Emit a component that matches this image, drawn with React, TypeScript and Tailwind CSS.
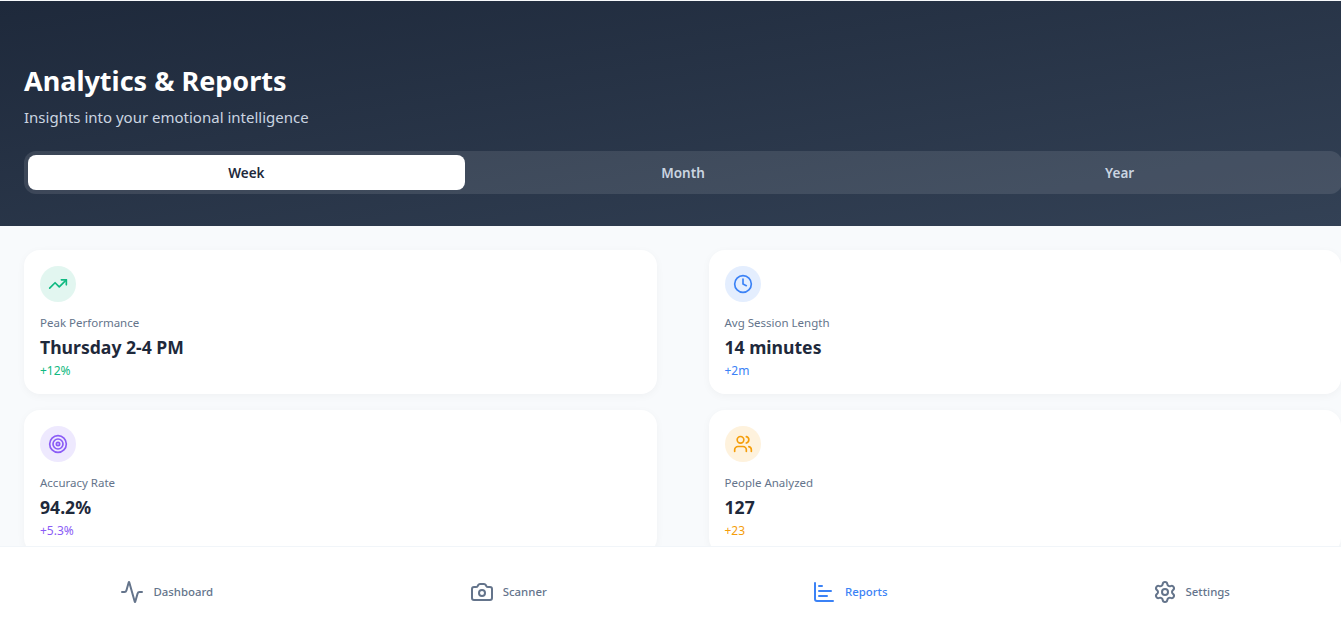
import { Activity, Camera, ChartBar, Clock, Settings, Target, TrendingUp, Users } from "lucide-react";

const stats = [
  {
    label: "Peak Performance",
    value: "Thursday 2-4 PM",
    delta: "+12%",
    Icon: TrendingUp,
    circle: "bg-[#e2f6f0]",
    tone: "text-[#10b981]",
  },
  {
    label: "Avg Session Length",
    value: "14 minutes",
    delta: "+2m",
    Icon: Clock,
    circle: "bg-[#e4eefe]",
    tone: "text-[#3b82f6]",
  },
  {
    label: "Accuracy Rate",
    value: "94.2%",
    delta: "+5.3%",
    Icon: Target,
    circle: "bg-[#eee9fe]",
    tone: "text-[#8b5cf6]",
  },
  {
    label: "People Analyzed",
    value: "127",
    delta: "+23",
    Icon: Users,
    circle: "bg-[#fef2dd]",
    tone: "text-[#f59e0b]",
  },
];

const tabs = ["Week", "Month", "Year"];

const navItems = [
  { label: "Dashboard", Icon: Activity },
  { label: "Scanner", Icon: Camera },
  { label: "Reports", Icon: ChartBar, active: true },
  { label: "Settings", Icon: Settings },
];

export default function App() {
  return (
    <div className="flex h-screen flex-col overflow-hidden bg-[#f8fafc] pt-px font-['Noto_Sans',sans-serif]">
      <header className="h-[225px] shrink-0 bg-gradient-to-br from-[#1e293b] to-[#334155] pl-6 pt-[62px]">
        <h1 className="text-[27px] font-bold leading-9 text-white">Analytics &amp; Reports</h1>
        <p className="mt-[6px] text-[15px] leading-6 text-[#cbd5e1]">Insights into your emotional intelligence</p>
        <div className="mt-[22px] flex w-[1318px] rounded-xl bg-white/10 p-1">
          {tabs.map((tab, i) => (
            <button
              key={tab}
              type="button"
              className={`h-[35px] flex-1 rounded-lg pt-px text-[13.5px] font-semibold ${
                i === 0 ? "bg-white text-[#1e293b]" : "text-[#cbd5e1]"
              }`}
            >
              {tab}
            </button>
          ))}
        </div>
      </header>

      <main className="min-h-0 flex-1 overflow-hidden pl-6 pt-6">
        <div className="grid grid-cols-2 gap-x-[52px] gap-y-4">
          {stats.map(({ label, value, delta, Icon, circle, tone }) => (
            <article key={label} className="h-36 rounded-2xl bg-white p-4 shadow-[0_2px_8px_rgba(0,0,0,0.04)]">
              <div className={`grid size-9 place-items-center rounded-full ${circle}`}>
                <Icon className={`size-5 ${tone}`} />
              </div>
              <p className="mt-[12px] text-[11.5px] leading-[18px] text-[#64748b]">{label}</p>
              <p className="mt-[2px] text-[17.6px] font-bold leading-[26px] text-[#1e293b]">{value}</p>
              <p className={`mt-[2px] text-xs leading-[18px] ${tone}`}>{delta}</p>
            </article>
          ))}
        </div>
      </main>

      <nav className="-ml-1 grid h-[86px] w-[1366px] shrink-0 grid-cols-4 border-t border-[#f1f5f9] bg-white pt-1">
        {navItems.map(({ label, Icon, active }) => (
          <button
            key={label}
            type="button"
            className={`flex items-center justify-center gap-[9px] text-[11.4px] font-medium ${
              active ? "text-[#3b82f6]" : "text-[#64748b]"
            }`}
          >
            <Icon className="size-6" />
            {label}
          </button>
        ))}
      </nav>
    </div>
  );
}
